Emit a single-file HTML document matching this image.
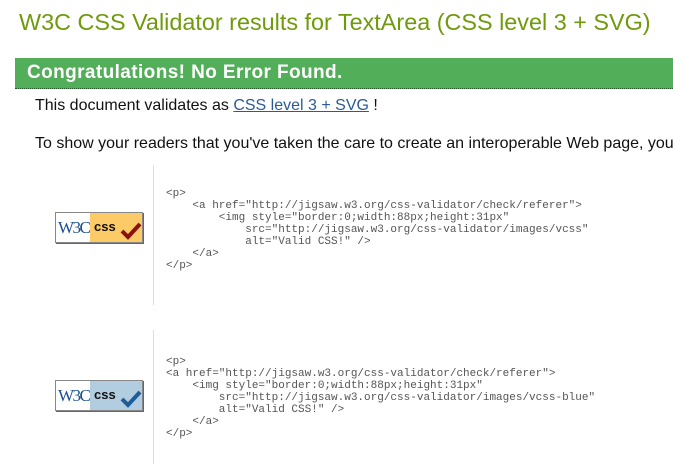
<!DOCTYPE html>
<html><head><meta charset="utf-8"><style>
body{margin:0;width:673px;height:464px;overflow:hidden;background:#fff;font-family:"Liberation Sans",Arial,sans-serif;position:relative}
.t{position:absolute;left:19px;top:9px;font-size:23.4px;color:#6f9a0c;white-space:nowrap}
.bar{position:absolute;left:15px;top:58px;width:660px;height:30px;background:#53ae59;border-bottom:1px dotted #2a5a2a}
.bar span{position:absolute;left:12px;top:4px;color:#fff;font-weight:bold;font-size:19px;letter-spacing:0.4px}
.p{position:absolute;left:35px;font-size:16px;color:#111;white-space:nowrap}
.p a{color:#2a5a9a;text-decoration:underline}
.vl{position:absolute;left:153px;width:1px;background:#ddd}
pre{position:absolute;left:166px;margin:0;font-family:"Liberation Mono",monospace;font-size:11px;line-height:12px;color:#555}
.b{position:absolute;left:55px;width:86px;height:29px;border:1px solid #888;box-shadow:1px 1px 0 #666;background:#fff;overflow:hidden}
.b .w{position:absolute;left:2px;top:5px;font-family:"Liberation Serif",serif;font-size:17px;color:#1a4f91;letter-spacing:-1.5px}
.b .c{position:absolute;left:34px;top:0;width:52px;height:29px}
.b .c span{position:absolute;left:4px;top:6px;font-weight:bold;font-size:13px;color:#111}
</style></head><body>
<div class="t">W3C CSS Validator results for TextArea (CSS level 3 + SVG)</div>
<div class="bar"><span>Congratulations! No Error Found.</span></div>
<div class="p" style="top:97px">This document validates as <a>CSS level 3 + SVG</a> !</div>
<div class="p" style="top:135px">To show your readers that you've taken the care to create an interoperable Web page, you</div>
<div class="vl" style="top:165px;height:140px"></div>
<div class="vl" style="top:330px;height:134px"></div>
<div class="b" style="top:212px"><div class="w">W3C</div><div class="c" style="background:#fcca66"><span>css</span>
<svg style="position:absolute;left:30px;top:8px" width="22" height="20"><path d="M2 10 L8 16 L20 3" stroke="#8b1010" stroke-width="4" fill="none"/></svg></div></div>
<pre style="top:188px">&lt;p&gt;
    &lt;a href="http://jigsaw.w3.org/css-validator/check/referer"&gt;
        &lt;img style="border:0;width:88px;height:31px"
            src="http://jigsaw.w3.org/css-validator/images/vcss"
            alt="Valid CSS!" /&gt;
    &lt;/a&gt;
&lt;/p&gt;</pre>
<div class="b" style="top:380px"><div class="w">W3C</div><div class="c" style="background:#b3cde0"><span>css</span>
<svg style="position:absolute;left:30px;top:8px" width="22" height="20"><path d="M2 10 L8 16 L20 3" stroke="#1f5d99" stroke-width="4" fill="none"/></svg></div></div>
<pre style="top:356px">&lt;p&gt;
&lt;a href="http://jigsaw.w3.org/css-validator/check/referer"&gt;
    &lt;img style="border:0;width:88px;height:31px"
        src="http://jigsaw.w3.org/css-validator/images/vcss-blue"
        alt="Valid CSS!" /&gt;
    &lt;/a&gt;
&lt;/p&gt;</pre>
</body></html>
